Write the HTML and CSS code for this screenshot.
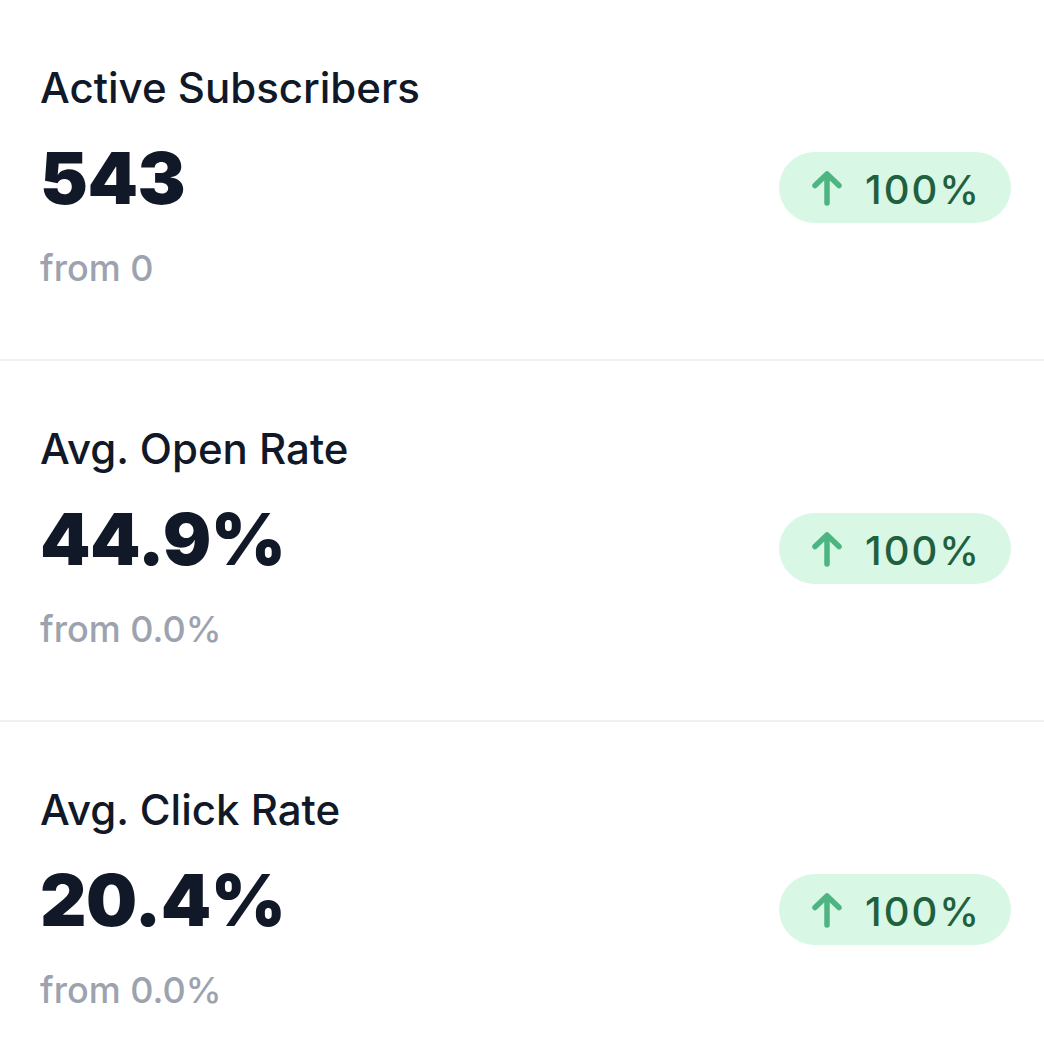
FILE: index.html
```html
<!DOCTYPE html>
<html lang="en">
<head>
<meta charset="utf-8">
<title>Stats</title>
<link rel="stylesheet" href="styles.css">
</head>
<body>
<main class="stats">
  <section class="stat">
    <div class="stat-label">Active Subscribers</div>
    <div class="stat-row">
      <div class="stat-value">543</div>
      <div class="badge"><svg class="arrow" viewBox="0 0 32 36" width="32" height="36"><path d="M16 33V4M4 15.5L16 4l12 11.5" fill="none" stroke="currentColor" stroke-width="5.5" stroke-linecap="round" stroke-linejoin="round"/></svg><span class="badge-text">100%</span></div>
    </div>
    <div class="stat-from">from 0</div>
  </section>
  <section class="stat">
    <div class="stat-label">Avg. Open Rate</div>
    <div class="stat-row">
      <div class="stat-value">44.9%</div>
      <div class="badge"><svg class="arrow" viewBox="0 0 32 36" width="32" height="36"><path d="M16 33V4M4 15.5L16 4l12 11.5" fill="none" stroke="currentColor" stroke-width="5.5" stroke-linecap="round" stroke-linejoin="round"/></svg><span class="badge-text">100%</span></div>
    </div>
    <div class="stat-from">from 0.0%</div>
  </section>
  <section class="stat">
    <div class="stat-label">Avg. Click Rate</div>
    <div class="stat-row">
      <div class="stat-value">20.4%</div>
      <div class="badge"><svg class="arrow" viewBox="0 0 32 36" width="32" height="36"><path d="M16 33V4M4 15.5L16 4l12 11.5" fill="none" stroke="currentColor" stroke-width="5.5" stroke-linecap="round" stroke-linejoin="round"/></svg><span class="badge-text">100%</span></div>
    </div>
    <div class="stat-from">from 0.0%</div>
  </section>
</main>
</body>
</html>
```

FILE: styles.css
```css
html, body {
  margin: 0;
  padding: 0;
  background: #ffffff;
}

body {
  font-family: Inter, "Noto Sans", "Liberation Sans", sans-serif;
  color: #111827;
  width: 1044px;
  height: 1048px;
  overflow: hidden;
}

.stats {
  display: flex;
  flex-direction: column;
}

.stat {
  height: 361px;
  box-sizing: border-box;
  padding: 63px 33px 0 40px;
  border-bottom: 2px solid #f0f0f1;
}

.stat-label {
  font-size: 42px;
  line-height: 50px;
  font-weight: 500;
  color: #111827;
}

.stat-row {
  display: flex;
  justify-content: space-between;
  align-items: baseline;
  margin-top: 25px;
}

.stat-value {
  font-size: 72px;
  line-height: 80px;
  font-weight: 900;
  color: #111827;
  letter-spacing: -0.5px;
}

.badge {
  display: block;
  font-size: 40px;
  line-height: 67px;
  height: 67px;
  padding: 4px 30px 0 32px;
  border-radius: 36px;
  background: #d9f7e5;
  white-space: nowrap;
}

.arrow {
  color: #4db581;
  vertical-align: -2px;
  margin-right: 22px;
}

.badge-text {
  font-weight: 500;
  letter-spacing: 2px;
  color: #1f613f;
}

.stat-from {
  margin-top: 23px;
  font-size: 36px;
  line-height: 44px;
  font-weight: 500;
  color: #9ca3af;
}
```
